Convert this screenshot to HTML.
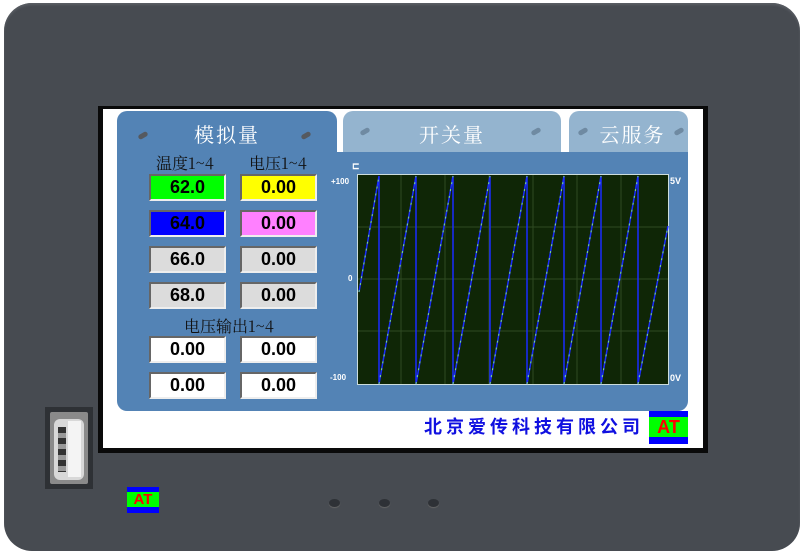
<!DOCTYPE html>
<html><head><meta charset="utf-8"><style>
*{margin:0;padding:0;box-sizing:border-box}
body{width:803px;height:553px;background:#fff;position:relative;overflow:hidden;font-family:"Liberation Sans","Noto Sans CJK SC",sans-serif}
.a{position:absolute}
.bez{left:4px;top:3px;width:796px;height:548px;border-radius:28px;background:#474b51;box-shadow:inset 0 2px 2px #5a5e64}
.scr{left:98px;top:106px;width:610px;height:347px;background:#0a0a0a}
.white{left:103px;top:109px;width:600px;height:339px;background:#fff}
.tab{top:111px;height:48px;border-radius:10px 10px 0 0;color:#fff;font-family:"Noto Serif CJK SC",serif;font-size:20px;text-align:center;line-height:46px;letter-spacing:2px}
.body{left:117px;top:152px;width:571px;height:259px;background:#5383b5;border-radius:0 0 10px 10px}
.box{width:77px;height:27px;border:2px solid;border-color:#666 #eee #eee #666;font-weight:bold;font-size:18px;text-align:center;line-height:23px;color:#000}
.lbl{font-family:"Noto Serif CJK SC",serif;font-size:16px;color:#111}
.ax{font-size:8px;font-weight:bold;color:#fff}
.dot{width:10px;height:5px;border-radius:3px;background:#55595f;transform:rotate(-30deg);}
.btn{width:11px;height:8px;border-radius:50%;background:#2e3136;box-shadow:0 1px 1px #666}
</style></head><body>
<div class="a bez"></div>
<div class="a scr"></div>
<div class="a white"></div>
<div class="a tab" style="left:117px;width:220px;background:#5383b5">模拟量</div>
<div class="a tab" style="left:343px;width:218px;height:41px;background:#94b4cf">开关量</div>
<div class="a tab" style="left:569px;width:119px;height:41px;background:#94b4cf;padding-left:8px">云服务</div>
<div class="a dot" style="left:138px;top:133px"></div><div class="a dot" style="left:301px;top:133px"></div>
<div class="a dot" style="left:360px;top:129px;background:#6f8aa2"></div><div class="a dot" style="left:531px;top:129px;background:#6f8aa2"></div>
<div class="a dot" style="left:578px;top:129px;background:#6f8aa2"></div><div class="a dot" style="left:674px;top:129px;background:#6f8aa2"></div>
<div class="a body"></div>
<div class="a lbl" style="left:156px;top:151px">温度1~4</div>
<div class="a lbl" style="left:249px;top:151px">电压1~4</div>
<div class="a lbl" style="left:184px;top:314px">电压输出1~4</div>
<div class="a box" style="left:149px;top:174px;background:#00ff00">62.0</div>
<div class="a box" style="left:240px;top:174px;background:#ffff00">0.00</div>
<div class="a box" style="left:149px;top:210px;background:#0000ff">64.0</div>
<div class="a box" style="left:240px;top:210px;background:#ff80ff">0.00</div>
<div class="a box" style="left:149px;top:246px;background:#dcdcdc">66.0</div>
<div class="a box" style="left:240px;top:246px;background:#dcdcdc">0.00</div>
<div class="a box" style="left:149px;top:282px;background:#dcdcdc">68.0</div>
<div class="a box" style="left:240px;top:282px;background:#dcdcdc">0.00</div>
<div class="a box" style="left:149px;top:336px;background:#fff">0.00</div>
<div class="a box" style="left:240px;top:336px;background:#fff">0.00</div>
<div class="a box" style="left:149px;top:372px;background:#fff">0.00</div>
<div class="a box" style="left:240px;top:372px;background:#fff">0.00</div>
<div class="a ax" style="left:331px;top:177px">+100</div>
<div class="a ax" style="left:348px;top:274px">0</div>
<div class="a ax" style="left:330px;top:373px">-100</div>
<div class="a ax" style="left:670px;top:176px;font-size:9px">5V</div>
<div class="a ax" style="left:670px;top:373px;font-size:9px">0V</div>
<div class="a ax" style="left:352px;top:161px;font-size:9px">⊏</div>
<svg class="a" style="left:357px;top:174px" width="313" height="212">
<rect x="0.5" y="0.5" width="311" height="210" fill="#0f2606" stroke="#cdd" stroke-width="1"/>
<g stroke="#2f4a22" stroke-width="1">
<line x1="44" y1="1" x2="44" y2="210"/><line x1="88" y1="1" x2="88" y2="210"/><line x1="132" y1="1" x2="132" y2="210"/><line x1="176" y1="1" x2="176" y2="210"/><line x1="220" y1="1" x2="220" y2="210"/><line x1="264" y1="1" x2="264" y2="210"/>
<line x1="1" y1="53" x2="311" y2="53"/><line x1="1" y1="105" x2="311" y2="105"/><line x1="1" y1="157" x2="311" y2="157"/></g>
<g stroke="#1a2cff" stroke-width="1.5" fill="none">
<path d="M2 118 L22 2 L22 210 L59 2 L59 210 L96 2 L96 210 L133 2 L133 210 L170 2 L170 210 L207 2 L207 210 L244 2 L244 210 L281 2 L281 210 L311 52"/></g>
<g stroke="#7fe07f" stroke-width="1" stroke-dasharray="2 5" fill="none">
<path d="M2 118 L22 2 M22 210 L59 2 M59 210 L96 2 M96 210 L133 2 M133 210 L170 2 M170 210 L207 2 M207 210 L244 2 M244 210 L281 2 M281 210 L311 52"/></g>
</svg>
<div class="a" style="left:424px;top:413px;font-size:18px;font-weight:bold;color:#1010e0;font-family:'WenQuanYi Zen Hei','Noto Sans CJK SC',sans-serif;letter-spacing:4px;white-space:nowrap">北京爱传科技有限公司</div>
<div class="a" style="left:649px;top:411px;width:39px;height:33px;background:#0000ff"><div class="a" style="left:0;top:6px;width:39px;height:20px;background:#00ff00;color:#ff0000;font-weight:bold;font-size:18px;text-align:center;line-height:20px">AT</div></div>
<div class="a" style="left:45px;top:407px;width:48px;height:82px;background:#2e3135"></div>
<div class="a" style="left:50px;top:412px;width:38px;height:72px;background:#8a8a8a;border-radius:2px"></div>
<div class="a" style="left:54px;top:419px;width:30px;height:61px;background:#d8d8d8;border-radius:6px"></div>
<div class="a" style="left:68px;top:421px;width:13px;height:56px;background:#f4f4f4"></div>
<div class="a" style="left:58px;top:427px;width:8px;height:45px;background:repeating-linear-gradient(#333 0 6px,#999 6px 11px)"></div>
<div class="a" style="left:127px;top:487px;width:32px;height:26px;background:#0000ff"><div class="a" style="left:0;top:5px;width:32px;height:15px;background:#00ff00;color:#ff0000;font-weight:bold;font-size:15px;text-align:center;line-height:15px">AT</div></div>
<div class="a btn" style="left:329px;top:499px"></div>
<div class="a btn" style="left:379px;top:499px"></div>
<div class="a btn" style="left:428px;top:499px"></div>
</body></html>
